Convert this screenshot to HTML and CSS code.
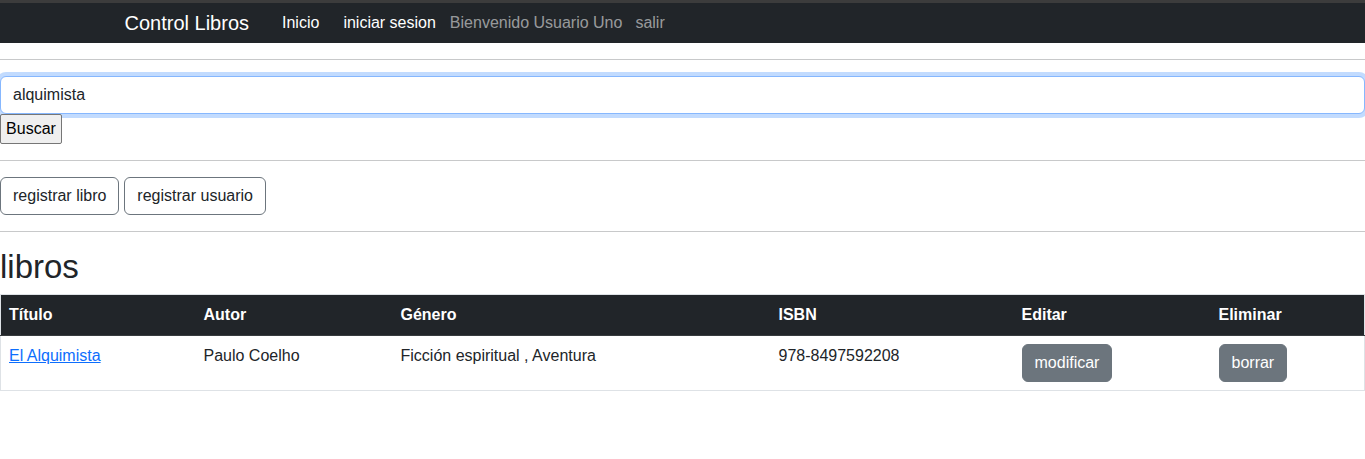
FILE: index.html
```html
<!DOCTYPE html>
<html lang="es">
<head>
<meta charset="utf-8">
<title>Control Libros</title>
<link rel="stylesheet" href="styles.css">
</head>
<body>
<nav class="navbar">
  <div class="nav-container">
    <a class="brand" href="#">Control Libros</a>
    <a class="nav-link active first" href="#">Inicio</a>
    <a class="nav-link active second" href="#">iniciar sesion</a>
    <span class="nav-link muted welcome">Bienvenido Usuario Uno</span>
    <a class="nav-link muted" href="#">salir</a>
  </div>
</nav>
<hr class="rule">
<form class="search">
  <input class="search-input" type="text" value="alquimista">
  <button class="search-btn" type="button">Buscar</button>
</form>
<hr class="rule">
<div class="actions">
  <button class="btn btn-outline" type="button">registrar libro</button>
  <button class="btn btn-outline" type="button">registrar usuario</button>
</div>
<hr class="rule">
<h2 class="title">libros</h2>
<table class="table">
  <thead>
    <tr>
      <th class="c1">Título</th>
      <th class="c2">Autor</th>
      <th class="c3">Género</th>
      <th class="c4">ISBN</th>
      <th class="c5">Editar</th>
      <th class="c6">Eliminar</th>
    </tr>
  </thead>
  <tbody>
    <tr>
      <td><a class="book-link" href="#">El Alquimista</a></td>
      <td>Paulo Coelho</td>
      <td>Ficción espiritual , Aventura</td>
      <td>978-8497592208</td>
      <td><button class="btn btn-secondary" type="button">modificar</button></td>
      <td><button class="btn btn-secondary" type="button">borrar</button></td>
    </tr>
  </tbody>
</table>
</body>
</html>
```
FILE: styles.css
```css
* { box-sizing: border-box; }
html, body { margin: 0; padding: 0; }
body {
  font-family: "Liberation Sans", Arial, sans-serif;
  font-size: 16px;
  line-height: 1.5;
  color: #212529;
  background: #fff;
}
.navbar {
  background: #212529;
  border-top: 3px solid #3c3c3c;
  height: 43px;
}
.nav-container {
  width: 1140px;
  margin: 0 auto;
  padding: 0 12px;
  height: 40px;
  display: flex;
  align-items: center;
}
.brand {
  color: #fff;
  font-size: 20px;
  text-decoration: none;
  margin-right: 33px;
  line-height: 30px;
}
.nav-link {
  text-decoration: none;
  line-height: 24px;
  margin-right: 14px;
}
.nav-link.first { margin-right: 24px; }
.nav-link.welcome { margin-right: 13px; }
.nav-link.active { color: #fff; }
.nav-link.muted { color: rgba(255,255,255,0.55); }
.rule {
  border: 0;
  border-top: 1px solid #c8c9ca;
  margin: 16px 0;
  height: 0;
}
.search { margin: 0; }
.search-input {
  display: block;
  width: 100%;
  height: 38px;
  padding: 6px 12px;
  font-family: inherit;
  font-size: 16px;
  color: #212529;
  border: 1px solid #86b7fe;
  border-radius: 6px;
  box-shadow: 0 0 0 4px rgba(13,110,253,0.25);
  outline: 0;
  background: #fff;
}
.search-btn {
  display: block;
  width: 62px;
  height: 30px;
  padding: 0;
  margin: 0;
  font-family: inherit;
  font-size: 16px;
  color: #000;
  background: #efefef;
  border: 1px solid #767676;
  border-radius: 2px;
}
.actions { display: flex; gap: 5px; }
.btn {
  display: inline-block;
  font-family: inherit;
  font-size: 16px;
  line-height: 24px;
  padding: 6px 12px;
  border-radius: 6px;
  border: 1px solid transparent;
  cursor: pointer;
}
.btn-outline {
  background: #fff;
  color: #212529;
  border-color: #6c757d;
}
.btn-secondary {
  background: #6c757d;
  border-color: #6c757d;
  color: #fff;
}
.title {
  font-size: 33px;
  font-weight: 500;
  line-height: 38px;
  margin: 0 0 8px;
}
.table {
  width: 100%;
  border-collapse: collapse;
  border: 1px solid #dee2e6;
  table-layout: fixed;
}
.table th, .table td {
  text-align: left;
  vertical-align: top;
  padding: 8px;
}
.table th {
  background: #212529;
  color: #fff;
  font-weight: 700;
  border-bottom: 1px solid #373b3e;
}
.table td { border-bottom: 1px solid #dee2e6; }
.c1 { width: 195px; }
.c2 { width: 197px; }
.c3 { width: 378px; }
.c4 { width: 243px; }
.c5 { width: 197px; }
.book-link { color: #0d6efd; text-decoration: underline; }
```
